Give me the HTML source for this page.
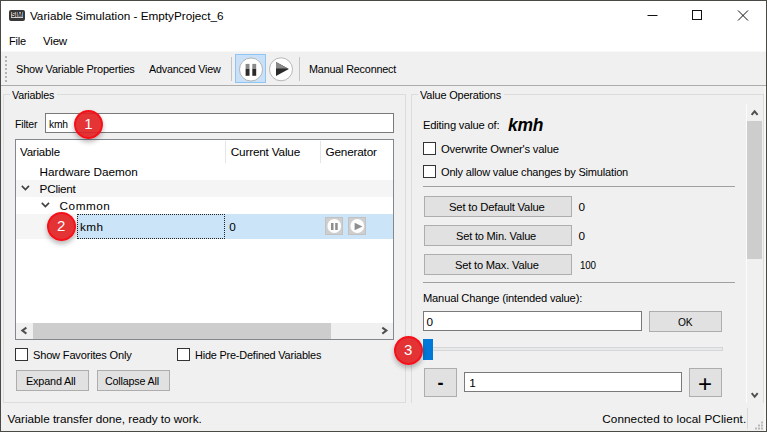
<!DOCTYPE html>
<html><head><meta charset="utf-8">
<style>
*{box-sizing:border-box;margin:0;padding:0}
html,body{width:767px;height:432px;overflow:hidden;background:#f0f0f0}
body{font-family:"Liberation Sans",sans-serif;font-size:12px;color:#000;position:relative}
.a{position:absolute;white-space:nowrap}
.t{position:absolute;white-space:nowrap;line-height:14px;height:14px}
.btn{position:absolute;background:#e1e1e1;border:1px solid #adadad;text-align:center;white-space:nowrap;letter-spacing:-0.2px}
.cb{position:absolute;width:13px;height:13px;background:#fff;border:1px solid #333}
.inp{position:absolute;background:#fff;border:1px solid #7a7a7a}
.badge{position:absolute;width:29px;height:29px;border-radius:50%;background:rgba(225,30,32,.9);border:2px solid rgba(245,15,25,.95);color:#fff;text-align:center;font-size:15px;line-height:23px;box-shadow:0 3px 5px rgba(0,0,0,.28)}
</style></head><body>
<!-- window frame -->
<div class="a" style="left:0;top:0;width:767px;height:432px;border:1px solid #4b4946"></div>
<div class="a" style="left:764px;top:86px;width:2px;height:345px;background:#f7f7f7"></div>
<!-- title + menu -->
<div class="a" style="left:1px;top:1px;width:765px;height:50px;background:#fff"></div>
<div class="a" style="left:1px;top:51px;width:765px;height:1px;background:#f8f8f8"></div>
<div class="a" style="left:9px;top:10px;width:16px;height:10.500px;background:#383838;border-radius:2px"></div>
<div class="a" style="left:10.700px;top:12px;width:12.600px;height:6.300px;background:#cfcfcf;font-size:6.500px;line-height:6.500px;color:#1a1a1a;text-align:center;font-weight:bold;overflow:hidden">SIM</div>
<svg class="a" style="left:640px;top:5px" width="120" height="22" viewBox="0 0 120 22" fill="none" stroke="#111" stroke-width="1"><path d="M7.5 10.5h10"/><rect x="52.500" y="5.500" width="9" height="9"/><path d="M98 5.500l10 10M108 5.500l-10 10"/></svg>
<!-- toolbar -->
<div class="a" style="left:1px;top:85px;width:765px;height:1px;background:#adadad"></div>
<div class="a" style="left:5px;top:56px;width:2px;height:26px;background:repeating-linear-gradient(#b4b4b4 0 2px,transparent 2px 4px)"></div>
<div class="a" style="left:231px;top:57px;width:1px;height:24px;background:#c4c4c4"></div>
<div class="a" style="left:235px;top:54px;width:31px;height:29px;background:#c9e0f6;border:1px solid #8fc5f2"></div>
<svg class="a" style="left:238px;top:56px" width="60" height="28" viewBox="0 0 60 28"><circle cx="13" cy="13.500" r="11.500" fill="#fff" stroke="#9a9a9a" stroke-width=".7"/><rect x="7.600" y="7.900" width="3.900" height="4.900" fill="#8a8a8a"/><rect x="14.300" y="7.900" width="3.900" height="4.900" fill="#8a8a8a"/><rect x="7.600" y="12.800" width="3.900" height="7" fill="#2b2b2b"/><rect x="14.300" y="12.800" width="3.900" height="7" fill="#2b2b2b"/><circle cx="43" cy="13.300" r="11.500" fill="#fff" stroke="#9a9a9a" stroke-width=".7"/><path d="M38 6l12.900 7L38 20z" fill="#2b2b2b"/><path d="M38 6l11.900 6.500H38z" fill="#8a8a8a"/></svg>
<div class="a" style="left:299px;top:57px;width:1px;height:24px;background:#c4c4c4"></div>
<!-- Variables group -->
<div class="a" style="left:3px;top:94px;width:403px;height:309px;border:1px solid #dcdcdc"></div>
<div class="a" style="left:10px;top:90px;width:47px;height:10px;background:#f0f0f0"></div>
<div class="inp" style="left:45px;top:113px;width:349px;height:20px"></div>
<!-- tree -->
<div class="a" style="left:15px;top:139px;width:379px;height:201px;background:#fff;border:1px solid #828790"></div>
<div class="a" style="left:225px;top:141px;width:1px;height:22px;background:#e5e5e5"></div>
<div class="a" style="left:320px;top:141px;width:1px;height:22px;background:#e5e5e5"></div>
<div class="a" style="left:16px;top:180px;width:377px;height:17px;background:#f5f5f5"></div>
<div class="a" style="left:16px;top:214px;width:61px;height:25px;background:#f5f5f5"></div>
<div class="a" style="left:77px;top:214px;width:316px;height:25px;background:#cce4f7"></div>
<div class="a" style="left:77px;top:214px;width:148px;height:25px;border:1px dotted #222"></div>
<svg class="a" style="left:20px;top:183px" width="12" height="10" viewBox="0 0 12 10" fill="none" stroke="#404040" stroke-width="1.600"><path d="M1.800 2.900l3.600 3.700L9 2.900"/></svg>
<svg class="a" style="left:40px;top:200px" width="12" height="10" viewBox="0 0 12 10" fill="none" stroke="#404040" stroke-width="1.600"><path d="M1.800 2.900l3.600 3.700L9 2.900"/></svg>
<!-- generator buttons -->
<div class="a" style="left:325px;top:217px;width:18px;height:18px;background:#cecece;border:1px solid #c2c2c2"></div>
<div class="a" style="left:348px;top:217px;width:18px;height:18px;background:#cecece;border:1px solid #c2c2c2"></div>
<svg class="a" style="left:325px;top:217px" width="42" height="18" viewBox="0 0 42 18"><circle cx="9.300" cy="9" r="6.900" fill="#fdfdfd"/><rect x="6" y="6" width="2.500" height="7" fill="#8e8e8e"/><rect x="10.200" y="6" width="2.500" height="7" fill="#8e8e8e"/><circle cx="32.300" cy="9" r="6.900" fill="#fdfdfd"/><path d="M29.600 5.800l7.900 3.700-7.900 3.800z" fill="#8e8e8e"/></svg>
<!-- h scrollbar -->
<div class="a" style="left:16px;top:323px;width:377px;height:16px;background:#f0f0f0"></div>
<div class="a" style="left:33px;top:323px;width:298px;height:16px;background:#cdcdcd"></div>
<svg class="a" style="left:16px;top:323px" width="377" height="16" viewBox="0 0 377 16" fill="none" stroke="#505050" stroke-width="2"><path d="M10.400 4.600L6.300 7.600l4.100 3M366.300 4.600l4.100 3-4.100 3"/></svg>
<!-- checkboxes -->
<div class="cb" style="left:15px;top:348px"></div>
<div class="cb" style="left:177px;top:348px"></div>
<div class="btn" style="left:16px;top:370px;width:73px;height:21px;line-height:19px"></div>
<div class="btn" style="left:97px;top:370px;width:73px;height:21px;line-height:19px"></div>
<!-- Value Operations group -->
<div class="a" style="left:411px;top:94px;width:353px;height:309px;border:1px solid #dcdcdc;border-bottom:none"></div>
<div class="a" style="left:418px;top:90px;width:86px;height:10px;background:#f0f0f0"></div>
<div class="cb" style="left:423px;top:142px"></div>
<div class="cb" style="left:423px;top:165px"></div>
<div class="a" style="left:423px;top:186px;width:312px;height:1px;background:#a0a0a0"></div>
<div class="btn" style="left:424px;top:196px;width:148px;height:21px;line-height:19px"></div>
<div class="btn" style="left:424px;top:225px;width:148px;height:21px;line-height:19px"></div>
<div class="btn" style="left:424px;top:254px;width:148px;height:21px;line-height:19px"></div>
<div class="a" style="left:423px;top:282px;width:312px;height:1px;background:#a0a0a0"></div>
<div class="inp" style="left:423px;top:311px;width:219px;height:20px"></div>
<div class="btn" style="left:649px;top:311px;width:73px;height:21px;line-height:19px"></div>
<!-- slider -->
<div class="a" style="left:423px;top:347px;width:300px;height:4px;background:#e7eaea;border:1px solid #d6d6d6"></div>
<div class="a" style="left:423px;top:339px;width:10px;height:21px;background:#0078d7"></div>
<div class="btn" style="left:424px;top:368px;width:33px;height:29px"></div>
<div class="inp" style="left:464px;top:372px;width:218px;height:20px"></div>
<div class="btn" style="left:689px;top:368px;width:33px;height:29px"></div>
<!-- v scrollbar -->
<div class="a" style="left:746px;top:104px;width:1px;height:299px;background:#fcfcfc"></div>
<div class="a" style="left:747px;top:121px;width:15px;height:138px;background:#cdcdcd"></div>
<svg class="a" style="left:747px;top:104px" width="16" height="299" viewBox="0 0 16 299" fill="none" stroke="#505050" stroke-width="2"><path d="M4.600 10.900L7.600 7.300l3 3.600M4.700 289.200l3 3.600 3-3.600"/></svg>
<!-- status bar -->
<div class="a" style="left:1px;top:404px;width:763px;height:27px;background:#f0f0f0"></div>
<div class="a" style="left:0;top:0;width:0;height:0"></div>
<div class="a" style="left:747px;top:408px;width:1px;height:21px;background:#d9d9d9"></div>
<svg class="a" style="left:753px;top:419px" width="12" height="11" viewBox="0 0 12 11" fill="#b9b9b9"><rect x="8" y="2.500" width="2" height="2"/><rect x="5" y="5.500" width="2" height="2"/><rect x="8" y="5.500" width="2" height="2"/><rect x="2" y="8.500" width="2" height="2"/><rect x="5" y="8.500" width="2" height="2"/><rect x="8" y="8.500" width="2" height="2"/></svg>
<div class="t" style="left:29.90px;top:9px;font-size:11.75px;letter-spacing:-0.003px;">Variable Simulation - EmptyProject_6</div>
<div class="t" style="left:9.40px;top:34px;font-size:11.75px;letter-spacing:-0.2px;transform:scaleX(0.9363);transform-origin:0 0;">File</div>
<div class="t" style="left:43.10px;top:34px;font-size:11.75px;letter-spacing:-0.2px;transform:scaleX(0.9813);transform-origin:0 0;">View</div>
<div class="t" style="left:16.40px;top:62px;font-size:11.75px;letter-spacing:-0.2px;transform:scaleX(0.9345);transform-origin:0 0;">Show Variable Properties</div>
<div class="t" style="left:148.80px;top:62px;font-size:11.75px;letter-spacing:-0.2px;transform:scaleX(0.9151);transform-origin:0 0;">Advanced View</div>
<div class="t" style="left:308.60px;top:62px;font-size:11.75px;letter-spacing:-0.2px;transform:scaleX(0.9194);transform-origin:0 0;">Manual Reconnect</div>
<div class="t" style="left:11.90px;top:88px;font-size:11.75px;letter-spacing:-0.2px;transform:scaleX(0.9091);transform-origin:0 0;">Variables</div>
<div class="t" style="left:14.90px;top:117px;font-size:11.75px;letter-spacing:-0.2px;transform:scaleX(0.8969);transform-origin:0 0;">Filter</div>
<div class="t" style="left:48.60px;top:117px;font-size:11.75px;letter-spacing:-0.2px;transform:scaleX(0.8748);transform-origin:0 0;">kmh</div>
<div class="t" style="left:20.30px;top:145px;font-size:11.75px;letter-spacing:-0.2px;transform:scaleX(0.9806);transform-origin:0 0;">Variable</div>
<div class="t" style="left:230.80px;top:145px;font-size:11.75px;letter-spacing:-0.182px;">Current Value</div>
<div class="t" style="left:325.50px;top:145px;font-size:11.75px;letter-spacing:-0.186px;">Generator</div>
<div class="t" style="left:39.60px;top:165px;font-size:11.75px;letter-spacing:-0.027px;">Hardware Daemon</div>
<div class="t" style="left:39.60px;top:182px;font-size:11.75px;letter-spacing:-0.269px;">PClient</div>
<div class="t" style="left:59.60px;top:199px;font-size:11.75px;letter-spacing:0.514px;">Common</div>
<div class="t" style="left:79.90px;top:220px;font-size:11.75px;letter-spacing:0.469px;">kmh</div>
<div class="t" style="left:229.30px;top:220px;font-size:11.75px;">0</div>
<div class="t" style="left:32.50px;top:348px;font-size:11.75px;letter-spacing:-0.2px;transform:scaleX(0.9416);transform-origin:0 0;">Show Favorites Only</div>
<div class="t" style="left:194.70px;top:348px;font-size:11.75px;letter-spacing:-0.2px;transform:scaleX(0.9259);transform-origin:0 0;">Hide Pre-Defined Variables</div>
<div class="t" style="left:7.60px;top:412px;font-size:11.75px;letter-spacing:-0.024px;">Variable transfer done, ready to work.</div>
<div class="t" style="left:602.20px;top:412px;font-size:11.75px;letter-spacing:0.086px;">Connected to local PClient.</div>
<div class="t" style="left:420.00px;top:88px;font-size:11.75px;letter-spacing:-0.2px;transform:scaleX(0.9340);transform-origin:0 0;">Value Operations</div>
<div class="t" style="left:423.30px;top:118px;font-size:11.75px;letter-spacing:-0.2px;transform:scaleX(0.9533);transform-origin:0 0;">Editing value of:</div>
<div class="t" style="left:508.40px;top:115px;font-size:18px;font-weight:bold;font-style:italic;letter-spacing:-0.2px;transform:scaleX(0.9695);transform-origin:0 0;line-height:20px;height:20px;">kmh</div>
<div class="t" style="left:440.50px;top:142px;font-size:11.75px;letter-spacing:-0.2px;transform:scaleX(0.9573);transform-origin:0 0;">Overwrite Owner's value</div>
<div class="t" style="left:440.50px;top:165px;font-size:11.75px;letter-spacing:-0.2px;transform:scaleX(0.9377);transform-origin:0 0;">Only allow value changes by Simulation</div>
<div class="t" style="left:578.50px;top:200px;font-size:11.75px;">0</div>
<div class="t" style="left:578.50px;top:229px;font-size:11.75px;">0</div>
<div class="t" style="left:580.00px;top:258px;font-size:11.75px;letter-spacing:-0.2px;transform:scaleX(0.8338);transform-origin:0 0;">100</div>
<div class="t" style="left:422.90px;top:291px;font-size:11.75px;letter-spacing:-0.2px;transform:scaleX(0.9493);transform-origin:0 0;">Manual Change (intended value):</div>
<div class="t" style="left:426.50px;top:315px;font-size:11.75px;">0</div>
<div class="t" style="left:469.20px;top:376px;font-size:11.75px;">1</div>
<div class="t" style="left:449.20px;top:200px;font-size:11.75px;letter-spacing:-0.2px;transform:scaleX(0.9601);transform-origin:0 0;">Set to Default Value</div>
<div class="t" style="left:456.40px;top:229px;font-size:11.75px;letter-spacing:-0.2px;transform:scaleX(0.9398);transform-origin:0 0;">Set to Min. Value</div>
<div class="t" style="left:454.60px;top:258px;font-size:11.75px;letter-spacing:-0.2px;transform:scaleX(0.9457);transform-origin:0 0;">Set to Max. Value</div>
<div class="t" style="left:26.30px;top:374px;font-size:11.75px;letter-spacing:-0.2px;transform:scaleX(0.9263);transform-origin:0 0;">Expand All</div>
<div class="t" style="left:105.30px;top:374px;font-size:11.75px;letter-spacing:-0.2px;transform:scaleX(0.9133);transform-origin:0 0;">Collapse All</div>
<div class="t" style="left:677.50px;top:315px;font-size:11.75px;letter-spacing:-0.2px;transform:scaleX(0.8678);transform-origin:0 0;">OK</div>
<div class="t" style="left:698px;top:370px;font-size:24px;line-height:28px;height:28px">+</div>
<div class="t" style="left:437.5px;top:369px;font-size:18px;font-weight:bold;line-height:28px;height:28px">-</div>
<!-- badges -->
<div class="badge" style="left:74px;top:109.5px">1</div>
<div class="badge" style="left:46.6px;top:212.3px">2</div>
<div class="badge" style="left:393.7px;top:335.7px">3</div>
</body></html>
